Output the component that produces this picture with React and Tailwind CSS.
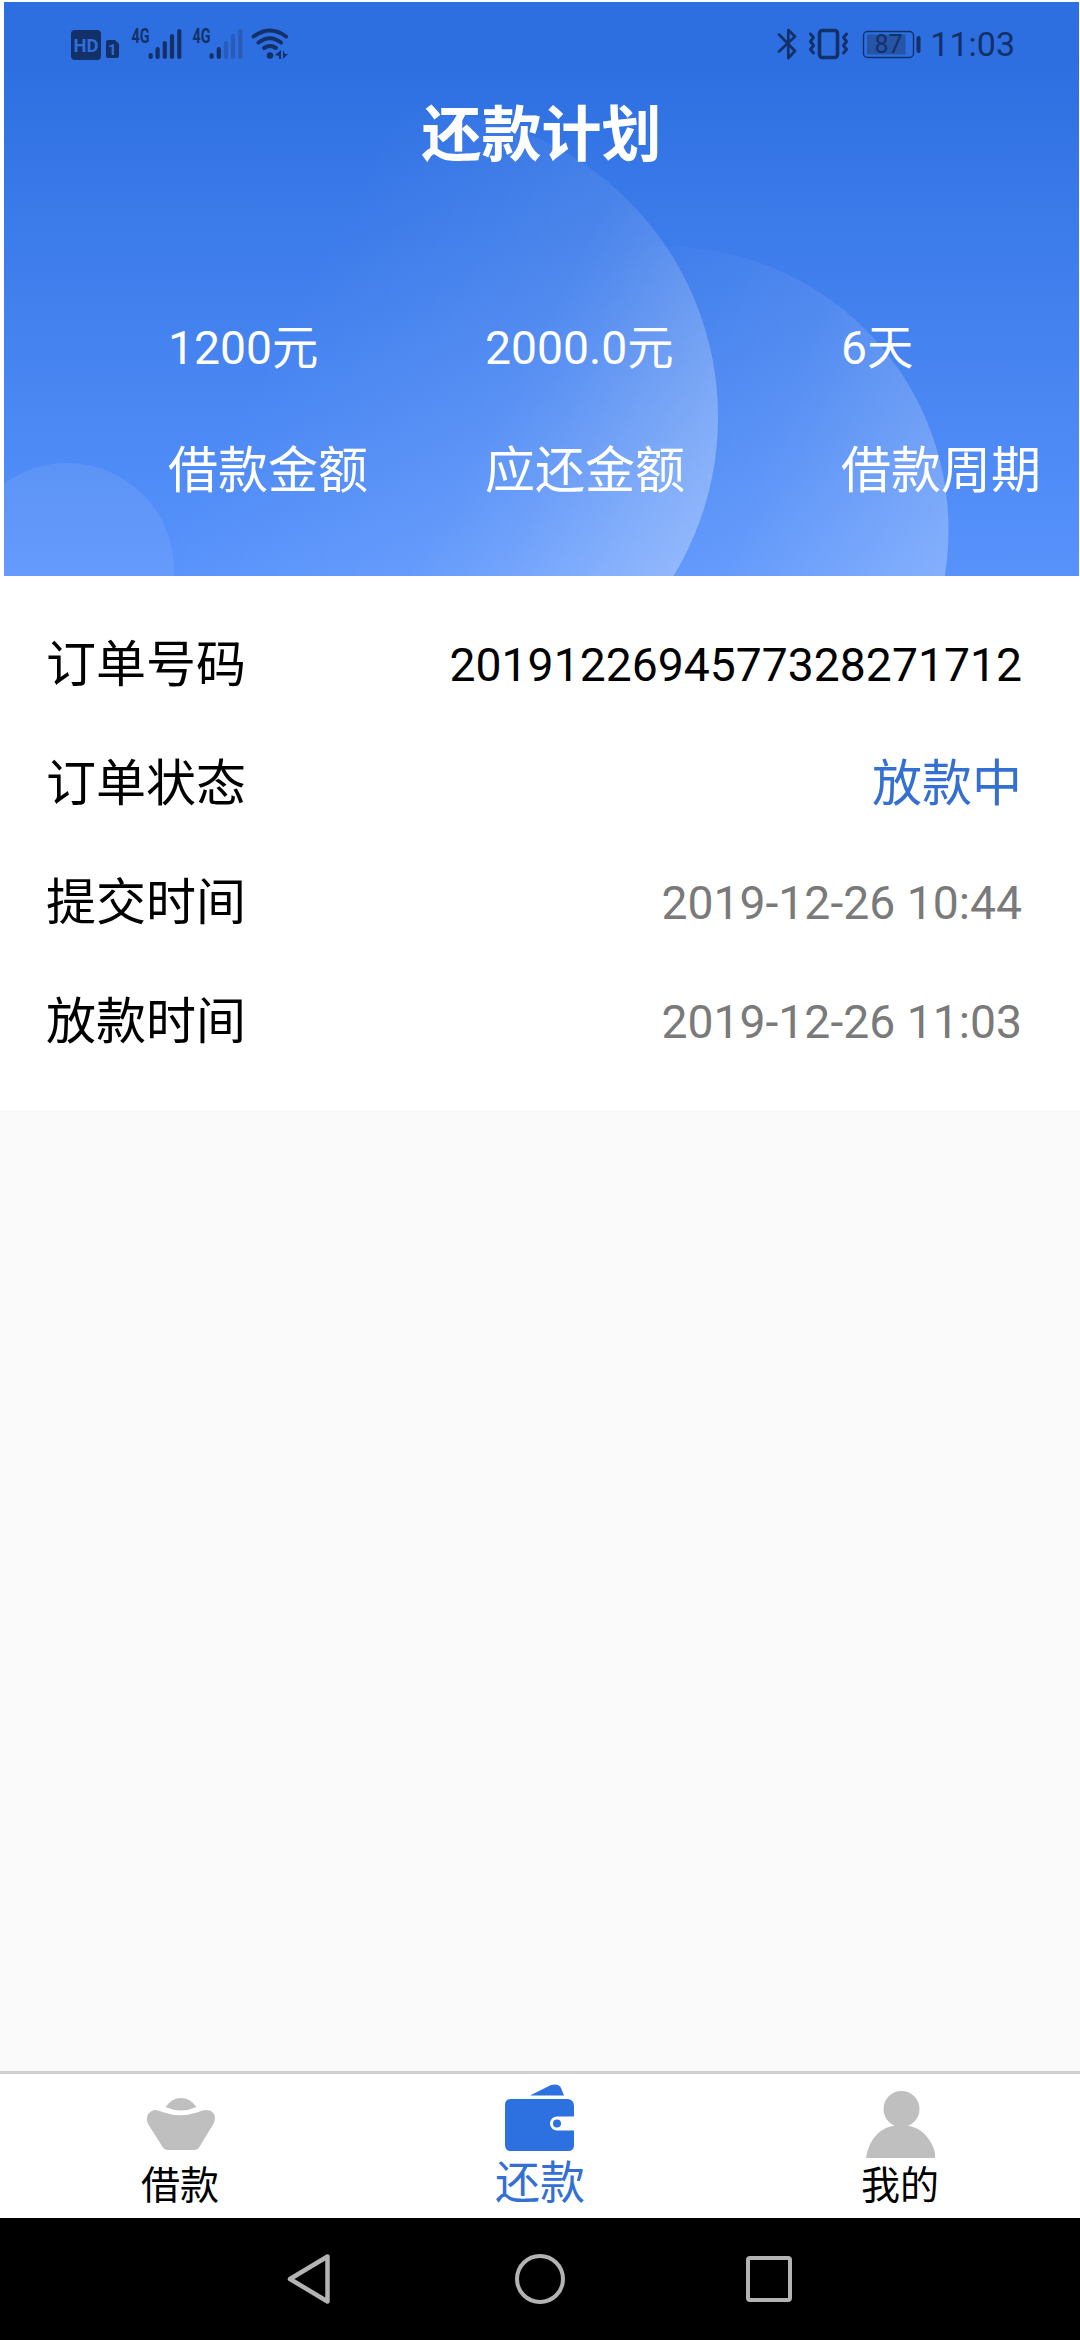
const resumen = [
  { valor: '1200元', etiqueta: '借款金额', pos: 'ml-[164px] w-[317px]' },
  { valor: '2000.0元', etiqueta: '应还金额', pos: 'w-[356px]' },
  { valor: '6天', etiqueta: '借款周期', pos: 'w-[220px]' },
];

const filas = [
  { etiqueta: '订单号码', valor: '2019122694577328271712', color: 'text-[46.3px] text-black' },
  { etiqueta: '订单状态', valor: '放款中', color: 'text-[50px] text-[#3470d2]' },
  { etiqueta: '提交时间', valor: '2019-12-26 10:44', color: 'text-[46.3px] text-[#7a7a7a]' },
  { etiqueta: '放款时间', valor: '2019-12-26 11:03', color: 'text-[46.3px] text-[#7a7a7a]' },
];

const SignalIcons = () => (
  <svg width="230" height="40" viewBox="68 24 230 40" fill="#133168">
    <rect x="71" y="30" width="30" height="30" rx="4" />
    <text x="86" y="52" fontSize="19" fontWeight="700" textAnchor="middle" textLength="25" lengthAdjust="spacingAndGlyphs" fill="#2f6fdc" className="font-['Roboto']">HD</text>
    <path d="M108 40h7l4 4v12a2 2 0 0 1-2 2h-9a2 2 0 0 1-2-2V42a2 2 0 0 1 2-2z" />
    <text x="112.3" y="55" fontSize="15" fontWeight="700" textAnchor="middle" fill="#2f6fdc" className="font-['Roboto']">1</text>
    {[131.5, 192.5].map((x) => (
      <text key={x} x={x} y="42.5" fontSize="19.5" fontWeight="700" textLength="18" lengthAdjust="spacingAndGlyphs" className="font-['Roboto']">4G</text>
    ))}
    <g stroke="#133168" strokeWidth="4.2" strokeLinecap="round">
      <path d="M150.7 55v2M157.6 49v8M164.8 43v14M172 36v21M179.3 31v26" />
      <path d="M211.6 55v2M218.8 49v8" />
      <path stroke="#285cb8" d="M226 43v14M233 36v21M240.3 31v26" />
    </g>
    <g fill="none" stroke="#133168" strokeWidth="4" strokeLinecap="round">
      <path d="M253.5 36.5Q270 24.5 286 36.5M258.5 42.5Q270 34 281 42.5M264 48Q270 44 276 48" />
    </g>
    <circle cx="270" cy="55.5" r="3.3" />
    <path d="M281 50v9h-2v-3l-4-1zM283 50v9l5-5h-3z" />
  </svg>
);

const PhoneIcons = () => (
  <svg width="146" height="40" viewBox="774 24 146 40" fill="none" stroke="#133168" strokeLinecap="round" strokeLinejoin="round">
    <path strokeWidth="2.7" d="M778 34.5L794 51L787.3 58V30L794 36.5L778 51.5" />
    <rect x="818.5" y="30.5" width="18" height="27" rx="3" strokeWidth="3.6" />
    <path strokeWidth="3" d="M809.5 34l3 3.500l-3 4l3 4l-3 4l3 3.500M845.500 34l-3 3.500l3 4l-3 4l3 4l-3 3.500" />
    <rect x="862.5" y="31.5" width="50" height="26" rx="4" strokeWidth="1.4" />
    <rect x="866" y="34.5" width="38.5" height="20" fill="#2655a8" stroke="none" />
    <path strokeWidth="4" d="M917.5 38v13" />
    <text x="887.5" y="52.5" fontSize="25" textAnchor="middle" fill="#133168" stroke="none" className="font-['Roboto']">87</text>
  </svg>
);

/* Círculos translúcidos del fondo azul */
const HeaderBubbles = () => (
  <svg className="absolute inset-0" width="1075" height="574" viewBox="4 2 1075 574">
    <defs>
      <linearGradient id="g1" gradientUnits="userSpaceOnUse" x1="270" y1="341" x2="682" y2="561">
        <stop offset="0" stopColor="#fff" stopOpacity="0" />
        <stop offset="0.5" stopColor="#fff" stopOpacity="0.08" />
        <stop offset="1" stopColor="#fff" stopOpacity="0.3" />
      </linearGradient>
      <linearGradient id="g2" gradientUnits="userSpaceOnUse" x1="535" y1="483" x2="931" y2="626">
        <stop offset="0" stopColor="#fff" stopOpacity="0" />
        <stop offset="0.5" stopColor="#fff" stopOpacity="0.08" />
        <stop offset="1" stopColor="#fff" stopOpacity="0.27" />
      </linearGradient>
    </defs>
    <circle cx="412" cy="417" r="306" fill="url(#g1)" />
    <circle cx="665" cy="530" r="283.5" fill="url(#g2)" />
    <circle cx="67" cy="570" r="107" fill="#fff" fillOpacity="0.08" />
  </svg>
);

const IngotIcon = () => (
  <svg width="69" height="52" viewBox="0 0 69 52" fill="#bfbfbf">
    <path d="M19.500 9Q26 0 35 0T50.500 9Q35 16 19.500 9z" />
    <path d="M8 12Q11 11.500 18 14.500Q34 20 51 14.500Q59 11 64 12.500Q71 16 68 25L54 48Q52 52 48 52H22Q18 52 16 48L2 26Q-2 16 8 12z" />
  </svg>
);

const WalletIcon = () => (
  <svg width="70" height="68" viewBox="0 0 70 68" fill="#2d70e0">
    <path d="M25 11.500L46 1Q54-1 56 4L59 11.500z" />
    <path d="M6 15H63Q69 16 69 22V32.500H52A7 7 0 0 0 52 46.500H69V61Q69 67 63 67H6Q0 67 0 61V21Q0 15 6 15z" />
    <circle cx="52" cy="39.5" r="4" />
  </svg>
);

const UserIcon = () => (
  <svg width="69" height="67" viewBox="0 0 69 67" fill="#bfbfbf">
    <circle cx="35.5" cy="18" r="18" />
    <path d="M0 67C3 48 14 37 27 35H43C56 37 66 49 69 62V67z" />
  </svg>
);

const App = () => {
  return (
    <div className="w-[1080px] h-[2340px] flex flex-col bg-[#fafafa] font-['Roboto','Noto_Sans_CJK_SC',sans-serif]">

      {/* --- CABECERA --- */}
      <div className="bg-white pl-1 pr-px pt-0.5">
        <header className="relative h-[574px] overflow-hidden bg-linear-to-b from-[#2d6fe1] from-10% to-[#5893fc] text-white">
          <HeaderBubbles />
          <div className="relative flex h-[84px] items-center pl-16 pr-[64px] text-[#133168]">
            <SignalIcons />
            <div className="ml-auto flex items-center gap-[9px]">
              <PhoneIcons />
              <span className="text-[34px] leading-none">11:03</span>
            </div>
          </div>
          <h1 className="relative mt-[8px] text-center text-[60px] leading-[84px] font-bold">还款计划</h1>
          <div className="relative mt-[132px] flex">
            {resumen.map((item) => (
              <div key={item.etiqueta} className={`shrink-0 whitespace-nowrap ${item.pos}`}>
                <p className="text-[46.3px] leading-[76px]">{item.valor}</p>
                <p className="mt-[49px] text-[50px] leading-[72px]">{item.etiqueta}</p>
              </div>
            ))}
          </div>
        </header>
      </div>

      {/* --- DATOS DEL PEDIDO --- */}
      <main className="h-[534px] bg-white pl-[46px] pr-[58px] pt-[30px]">
        {filas.map((fila) => (
          <div key={fila.etiqueta} className="flex h-[119px] items-center justify-between">
            <span className="text-[50px] text-black">{fila.etiqueta}</span>
            <span className={fila.color}>{fila.valor}</span>
          </div>
        ))}
      </main>

      {/* --- PESTAÑAS --- */}
      <nav className="mt-auto grid h-[147px] grid-cols-3 border-t-[3px] border-[#d0d0d0] bg-white text-black">
        <div className="flex flex-col items-center pt-6">
          <IngotIcon />
          <span className="mt-4 text-[39px] leading-10">借款</span>
        </div>
        <div className="flex flex-col items-center pt-2.5 text-[#3470d2]">
          <WalletIcon />
          <span className="mt-2.5 text-[45px] leading-[44px]">还款</span>
        </div>
        <div className="flex flex-col items-center pt-[17px]">
          <UserIcon />
          <span className="mt-2 text-[39px] leading-10">我的</span>
        </div>
      </nav>

      {/* --- BOTONES DEL SISTEMA --- */}
      <div className="flex h-[122px] items-center bg-black pl-[286px]">
        <svg width="50" height="50" viewBox="0 0 50 50" fill="none" stroke="#b3b3b3" strokeWidth="4.5" strokeLinejoin="round">
          <path d="M4 25L41.500 2.500V47.500z" />
        </svg>
        <div className="ml-[179px] size-[50px] rounded-full border-4 border-[#b3b3b3]"></div>
        <div className="ml-[181px] size-[46px] rounded-[4px] border-4 border-[#b3b3b3]"></div>
      </div>
    </div>
  );
};

export default App;
